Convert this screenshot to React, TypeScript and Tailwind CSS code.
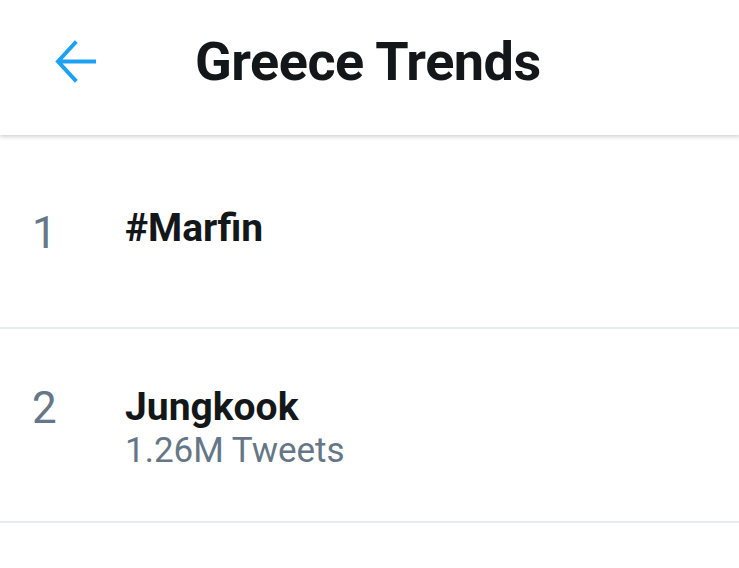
const trends = [
  { rank: 1, name: "#Marfin", tweets: "", pad: "pt-[70px]", numOffset: "mt-[4px]" },
  { rank: 2, name: "Jungkook", tweets: "1.26M Tweets", pad: "pt-[55px]", numOffset: "mt-0" },
];

export default function App() {
  return (
    <div
      className="w-[739px] h-[568px] bg-white overflow-hidden flex flex-col"
      style={{ fontFamily: "Roboto, 'Liberation Sans', sans-serif" }}
    >
      {/* Header */}
      <div className="relative z-10 h-[135px] shrink-0 flex items-center pb-[12px] bg-white shadow-[0_2px_4px_rgba(0,0,0,0.18)]">
        <div className="w-[195px] pl-[55px] flex items-center">
          <svg width="41" height="43" viewBox="0 0 41 43" fill="none">
            <path
              d="M40 21.5H5M20 3L3 21.5L20 40"
              stroke="#1da1f2"
              strokeWidth="4"
              strokeLinecap="square"
            />
          </svg>
        </div>
        <h1 className="text-[54px] leading-[60px] font-bold text-[#14171a] tracking-[-0.5px]">
          Greece Trends
        </h1>
      </div>

      {/* Trends list */}
      <div className="flex flex-col">
        {trends.map((t) => (
          <div
            key={t.rank}
            className={`h-[194px] flex items-start border-b-2 border-[#e6ecf0] ${t.pad}`}
          >
            <div className={`w-[125px] pl-[32px] text-[44px] leading-[48px] text-[#657786] ${t.numOffset}`}>
              {t.rank}
            </div>
            <div className="flex flex-col">
              <div className="text-[39px] leading-[46px] font-bold text-[#14171a]">{t.name}</div>
              {t.tweets && (
                <div className="mt-[1px] text-[35px] leading-[40px] text-[#657786]">{t.tweets}</div>
              )}
            </div>
          </div>
        ))}
      </div>
    </div>
  );
}
